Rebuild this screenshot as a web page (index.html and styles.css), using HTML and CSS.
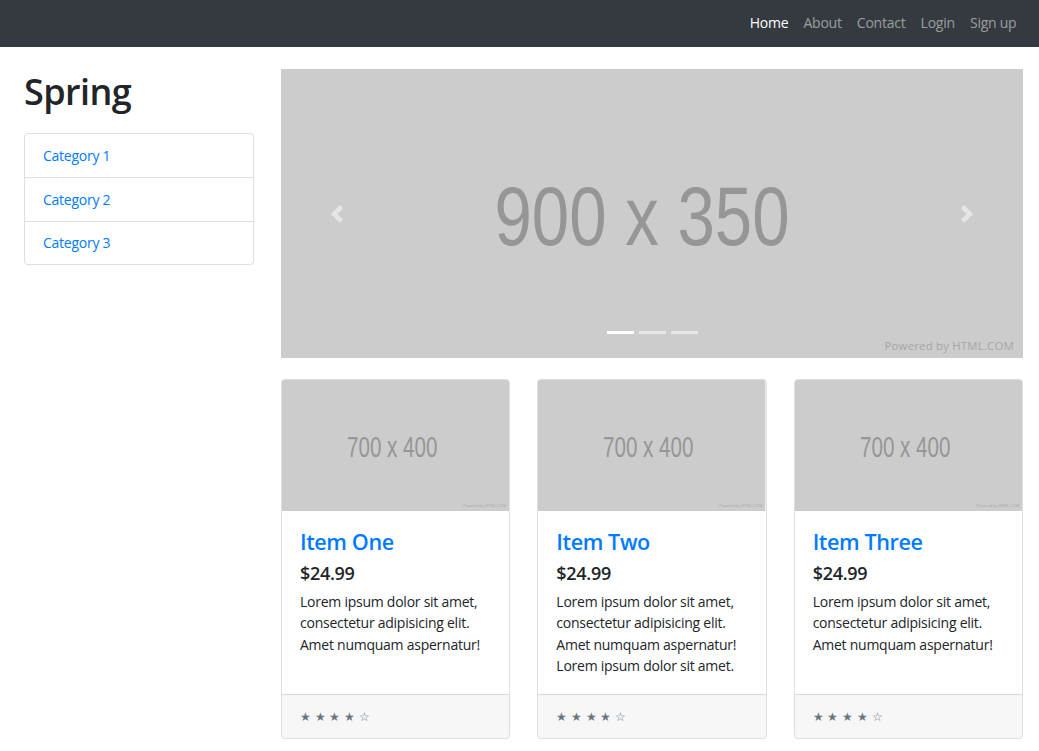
FILE: index.html
```html
<!DOCTYPE html>
<html lang="en">
<head>
<meta charset="utf-8">
<title>Spring</title>
<link rel="stylesheet" href="styles.css">
</head>
<body>
<nav class="navbar">
  <ul class="nav-links">
    <li><a class="nav-link active" href="#">Home</a></li>
    <li><a class="nav-link" href="#">About</a></li>
    <li><a class="nav-link" href="#">Contact</a></li>
    <li><a class="nav-link" href="#">Login</a></li>
    <li><a class="nav-link" href="#">Sign up</a></li>
  </ul>
</nav>

<div class="page">
  <aside class="sidebar">
    <h1 class="brand">Spring</h1>
    <div class="list-group">
      <a href="#" class="list-item">Category 1</a>
      <a href="#" class="list-item">Category 2</a>
      <a href="#" class="list-item">Category 3</a>
    </div>
  </aside>

  <main class="main">
    <div class="carousel">
      <svg class="placeholder" viewBox="0 0 742 289" preserveAspectRatio="none">
        <text x="361" y="176" text-anchor="middle" class="ph-big" textLength="295" lengthAdjust="spacingAndGlyphs">900 x 350</text>
        <text x="733" y="281" text-anchor="end" class="ph-power">Powered by HTML.COM</text>
      </svg>
      <a class="control prev" href="#">
        <svg viewBox="0 0 8 8" width="18" height="18"><path d="M5.25 0l-4 4 4 4 1.5-1.5L4.25 4l2.5-2.5L5.25 0z"/></svg>
      </a>
      <a class="control next" href="#">
        <svg viewBox="0 0 8 8" width="18" height="18"><path d="M2.75 0l-1.5 1.5L3.75 4l-2.5 2.5L2.75 8l4-4-4-4z"/></svg>
      </a>
      <ol class="indicators">
        <li class="active"></li>
        <li></li>
        <li></li>
      </ol>
    </div>

    <div class="cards">
      <div class="card">
        <svg class="card-img" viewBox="0 0 229 131" preserveAspectRatio="none">
          <rect width="229" height="131" fill="#ccc"/>
          <text x="111" y="77" text-anchor="middle" class="ph-small" textLength="91" lengthAdjust="spacingAndGlyphs">700 x 400</text>
          <text x="226" y="127" text-anchor="end" class="ph-tiny">Powered by HTML.COM</text>
        </svg>
        <div class="card-body">
          <h4 class="card-title"><a href="#">Item One</a></h4>
          <h5 class="price">$24.99</h5>
          <p class="card-text">Lorem ipsum dolor sit amet, consectetur adipisicing elit. Amet numquam aspernatur!</p>
        </div>
        <div class="card-footer"><small class="stars">&#9733; &#9733; &#9733; &#9733; &#9734;</small></div>
      </div>

      <div class="card">
        <svg class="card-img" viewBox="0 0 229 131" preserveAspectRatio="none">
          <rect width="229" height="131" fill="#ccc"/>
          <text x="111" y="77" text-anchor="middle" class="ph-small" textLength="91" lengthAdjust="spacingAndGlyphs">700 x 400</text>
          <text x="226" y="127" text-anchor="end" class="ph-tiny">Powered by HTML.COM</text>
        </svg>
        <div class="card-body">
          <h4 class="card-title"><a href="#">Item Two</a></h4>
          <h5 class="price">$24.99</h5>
          <p class="card-text">Lorem ipsum dolor sit amet, consectetur adipisicing elit. Amet numquam aspernatur! Lorem ipsum dolor sit amet.</p>
        </div>
        <div class="card-footer"><small class="stars">&#9733; &#9733; &#9733; &#9733; &#9734;</small></div>
      </div>

      <div class="card">
        <svg class="card-img" viewBox="0 0 229 131" preserveAspectRatio="none">
          <rect width="229" height="131" fill="#ccc"/>
          <text x="111" y="77" text-anchor="middle" class="ph-small" textLength="91" lengthAdjust="spacingAndGlyphs">700 x 400</text>
          <text x="226" y="127" text-anchor="end" class="ph-tiny">Powered by HTML.COM</text>
        </svg>
        <div class="card-body">
          <h4 class="card-title"><a href="#">Item Three</a></h4>
          <h5 class="price">$24.99</h5>
          <p class="card-text">Lorem ipsum dolor sit amet, consectetur adipisicing elit. Amet numquam aspernatur!</p>
        </div>
        <div class="card-footer"><small class="stars">&#9733; &#9733; &#9733; &#9733; &#9734;</small></div>
      </div>
    </div>
  </main>
</div>
</body>
</html>
```

FILE: styles.css
```css
* { box-sizing: border-box; }

body {
  margin: 0;
  font-family: "Open Sans", "Noto Sans", "Liberation Sans", sans-serif;
  font-size: 14px;
  letter-spacing: -0.25px;
  line-height: 21.6px;
  color: #212529;
  background: #fff;
}

a { text-decoration: none; }

.navbar {
  background: #343a40;
  height: 47px;
  display: flex;
  justify-content: flex-end;
  align-items: center;
  padding: 0 15px 0 24px;
}

.nav-links {
  list-style: none;
  margin: 0;
  padding: 0 0 2px;
  display: flex;
}

.nav-link {
  display: block;
  padding: 7px 7.6px;
  color: rgba(255, 255, 255, 0.5);
}

.nav-link.active { color: #fff; }

.page {
  display: flex;
  gap: 27px;
  padding: 0 16px 0 24px;
  align-items: flex-start;
}

.sidebar { width: 230px; flex: none; }

.brand {
  font-size: 36px;
  font-weight: 600;
  letter-spacing: -0.6px;
  line-height: 43.2px;
  margin: 22.6px 0 20.6px;
}

.list-group {
  display: flex;
  flex-direction: column;
  border: 1px solid rgba(0, 0, 0, 0.125);
  border-radius: 3.6px;
}

.list-item {
  display: block;
  padding: 10.8px 18px;
  color: #007bff;
  line-height: 21px;
}

.list-item + .list-item { border-top: 1px solid rgba(0, 0, 0, 0.125); }

.main { width: 742px; flex: none; margin-top: 22px; }

.carousel {
  position: relative;
  height: 289px;
  background: #ccc;
  margin-bottom: 21px;
}

.placeholder { display: block; width: 100%; height: 100%; }

.ph-big {
  font-family: "Liberation Sans", Arial, sans-serif;
  font-size: 84px;
  letter-spacing: 0;
  fill: #969696;
}

.ph-power {
  font-family: "Open Sans", sans-serif;
  font-size: 11.4px;
  letter-spacing: 0.2px;
  fill: #a6a6a6;
}

.control {
  position: absolute;
  top: 0;
  bottom: 0;
  width: 15%;
  display: flex;
  align-items: center;
  justify-content: center;
  fill: #fff;
  opacity: 0.5;
}

.control.prev { left: 0; }
.control.next { right: 0; }

.indicators {
  position: absolute;
  left: 0;
  right: 0;
  bottom: 24px;
  margin: 0;
  padding: 0;
  list-style: none;
  display: flex;
  justify-content: center;
  gap: 5px;
}

.indicators li {
  width: 27px;
  height: 2.7px;
  background: rgba(255, 255, 255, 0.5);
}

.indicators li.active { background: #fff; }

.cards {
  display: grid;
  grid-template-columns: repeat(3, 1fr);
  gap: 27px;
}

.card {
  display: flex;
  flex-direction: column;
  border: 1px solid rgba(0, 0, 0, 0.125);
  border-radius: 3.6px;
  overflow: hidden;
}

.card-img { display: block; width: 100%; height: 131px; }

.ph-small {
  font-family: "Liberation Sans", Arial, sans-serif;
  font-size: 29px;
  letter-spacing: 0;
  fill: #969696;
}

.ph-tiny {
  font-family: "Liberation Sans", Arial, sans-serif;
  font-size: 4px;
  letter-spacing: 0;
  fill: #aaa;
}

.card-body {
  flex: 1;
  padding: 18px;
}

.card-title {
  margin: 0 0 7.6px;
  font-size: 21.6px;
  line-height: 26px;
  font-weight: 600;
  letter-spacing: -0.4px;
}

.card-title a { color: #007bff; }

.price {
  margin: 0 0 7px;
  font-size: 18px;
  line-height: 21.6px;
  font-weight: 600;
  letter-spacing: -0.3px;
}

.card-text { margin: 0; line-height: 21.2px; }

.card-footer {
  background: rgba(0, 0, 0, 0.03);
  border-top: 1px solid rgba(0, 0, 0, 0.125);
  padding: 10.8px 18px;
  height: 44px;
  display: flex;
  align-items: center;
}

.stars {
  color: #6c757d;
  font-size: 12px;
  line-height: 1;
  letter-spacing: 0.3px;
}
```
